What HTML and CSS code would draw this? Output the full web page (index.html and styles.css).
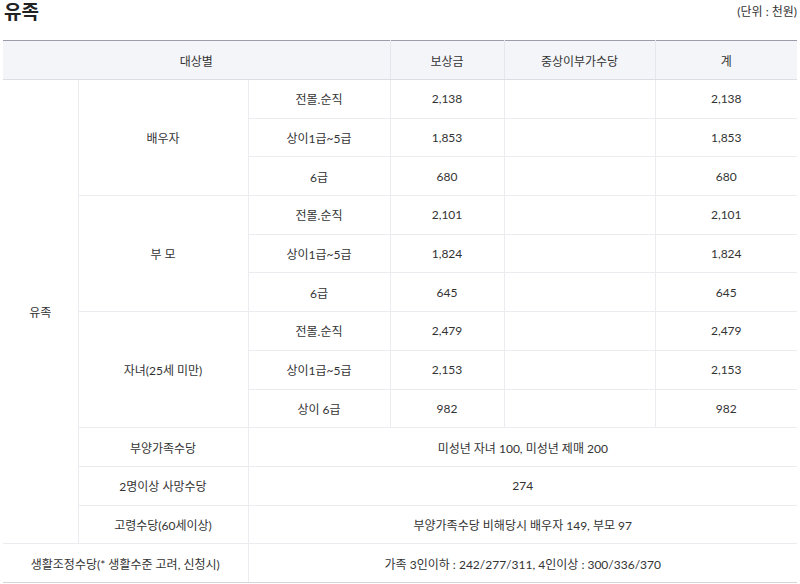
FILE: index.html
```html
<!DOCTYPE html>
<html lang="ko">
<head>
<meta charset="utf-8">
<link rel="stylesheet" href="styles.css">
</head>
<body>
<div class="page">
  <div class="head">
    <h2 class="title">유족</h2>
    <span class="unit">(단위 : 천원)</span>
  </div>
  <table class="tbl">
    <colgroup>
      <col class="c1"><col class="c2"><col class="c3"><col class="c4"><col class="c5"><col class="c6">
    </colgroup>
    <thead>
      <tr>
        <th colspan="3">대상별</th>
        <th>보상금</th>
        <th>중상이부가수당</th>
        <th>계</th>
      </tr>
    </thead>
    <tbody>
      <tr>
        <td rowspan="12">유족</td>
        <td rowspan="3">배우자</td>
        <td>전몰.순직</td><td>2,138</td><td></td><td>2,138</td>
      </tr>
      <tr><td>상이1급~5급</td><td>1,853</td><td></td><td>1,853</td></tr>
      <tr><td>6급</td><td>680</td><td></td><td>680</td></tr>
      <tr>
        <td rowspan="3">부 모</td>
        <td>전몰.순직</td><td>2,101</td><td></td><td>2,101</td>
      </tr>
      <tr><td>상이1급~5급</td><td>1,824</td><td></td><td>1,824</td></tr>
      <tr><td>6급</td><td>645</td><td></td><td>645</td></tr>
      <tr>
        <td rowspan="3">자녀(25세 미만)</td>
        <td>전몰.순직</td><td>2,479</td><td></td><td>2,479</td>
      </tr>
      <tr><td>상이1급~5급</td><td>2,153</td><td></td><td>2,153</td></tr>
      <tr><td>상이 6급</td><td>982</td><td></td><td>982</td></tr>
      <tr><td>부양가족수당</td><td colspan="4">미성년 자녀 100, 미성년 제매 200</td></tr>
      <tr><td>2명이상 사망수당</td><td colspan="4">274</td></tr>
      <tr><td>고령수당(60세이상)</td><td colspan="4">부양가족수당 비해당시 배우자 149, 부모 97</td></tr>
      <tr class="last"><td colspan="2">생활조정수당(* 생활수준 고려, 신청시)</td><td colspan="4">가족 3인이하 : 242/277/311, 4인이상 : 300/336/370</td></tr>
    </tbody>
  </table>
</div>
</body>
</html>
```

FILE: styles.css
```css
html, body {
  margin: 0;
  padding: 0;
  background: #fff;
}
body {
  font-family: Lato, "Noto Sans CJK KR", sans-serif;
  color: #333;
}
.page {
  padding: 0 3px;
}
.head {
  display: flex;
  justify-content: space-between;
  align-items: center;
  height: 24px;
  margin-bottom: 16px;
}
.title {
  margin: 0 0 0 1px;
  font-size: 19px;
  line-height: 24px;
  font-weight: 700;
  color: #222;
}
.unit {
  font-size: 12px;
  line-height: 24px;
  color: #333;
}
.tbl {
  width: 794px;
  table-layout: fixed;
  border-collapse: collapse;
  font-size: 12px;
  border-top: 1px solid #9c9cab;
  border-bottom: 1px solid #d4d4da;
}
.c1 { width: 75px; }
.c2 { width: 170px; }
.c3 { width: 142px; }
.c4 { width: 114px; }
.c5 { width: 151px; }
.c6 { width: 142px; }
.tbl th {
  background: #f4f5f9;
  font-weight: 400;
  height: 38px;
  padding: 0;
  border-bottom: 1px solid #dcdce4;
  border-left: 1px solid #e6e6ee;
  text-align: center;
}
.tbl th:first-child { border-left: 0; }
.tbl td {
  height: 37.7px;
  padding: 0;
  text-align: center;
  border: 1px solid #ececf0;
}
.tbl tbody tr:first-child td:first-child { border-left: 0; }
.tbl tr.last td:first-child { border-left: 0; }
.tbl td:last-child { border-right: 0; }
.tbl tr.last td { border-bottom: 1px solid #d4d4da; }
```
